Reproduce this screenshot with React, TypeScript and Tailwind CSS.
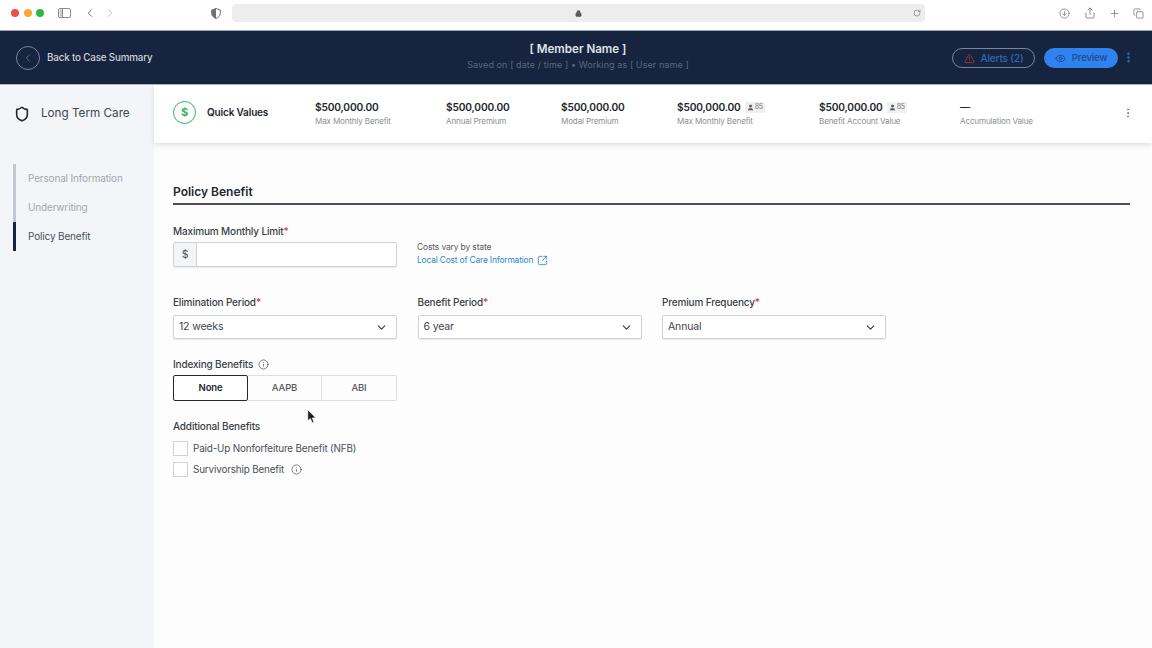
import { ChevronDown, ChevronLeft, ChevronRight, CircleArrowDown, Eye, EllipsisVertical, Info, Lock, Plus, RotateCw, Share, Shield, SquareArrowOutUpRight, TriangleAlert, User, Copy } from "lucide-react";

const quickValues = [
  { value: "$500,000.00", label: "Max Monthly Benefit", width: "w-[131px]" },
  { value: "$500,000.00", label: "Annual Premium", width: "w-[115px]" },
  { value: "$500,000.00", label: "Modal Premium", width: "w-[116px]" },
  { value: "$500,000.00", label: "Max Monthly Benefit", width: "w-[142px]", badge: true },
  { value: "$500,000.00", label: "Benefit Account Value", width: "w-[141px]", badge: true },
  { value: "—", label: "Accumulation Value", width: "w-[163px]" },
];

function Req({ children }: { children: React.ReactNode }) {
  return (
    <div className="text-[10px] leading-[14px] font-medium text-[#3a3f47]">
      {children}
      <span className="text-[#e5304a]">*</span>
    </div>
  );
}

function SelectBox({ label, value }: { label: string; value: string }) {
  return (
    <div className="w-[224px]">
      <Req>{label}</Req>
      <div className="mt-[6px] flex h-[24px] items-center justify-between rounded-[2px] border border-[#cfd3d8] bg-white pr-[8px] pl-[5px] text-[10.5px] text-[#3f444c] shadow-[0_1px_1px_rgba(0,0,0,0.08)]">
        {value}
        <ChevronDown className="h-[13px] w-[13px] text-[#3a3f47]" strokeWidth={2.2} />
      </div>
    </div>
  );
}

export default function App() {
  return (
    <div className="relative flex h-[648px] w-[1152px] flex-col overflow-hidden bg-[#fdfdfd] font-['Inter','Liberation_Sans',sans-serif] tracking-[-0.01em]">
      {/* browser chrome */}
      <div className="flex h-[31px] shrink-0 items-center border-b border-[#9aa3b2] bg-white pb-[4px]">
        <div className="ml-[11px] flex gap-[4.5px]">
          <span className="h-[8px] w-[8px] rounded-full bg-[#ee4f47]" />
          <span className="h-[8px] w-[8px] rounded-full bg-[#f4ab2f]" />
          <span className="h-[8px] w-[8px] rounded-full bg-[#2fb84a]" />
        </div>
        <svg className="ml-[14px] h-[10px] w-[13px] text-[#8a8d92]" viewBox="0 0 13 10" fill="none" stroke="currentColor">
          <rect x="0.5" y="0.5" width="12" height="9" rx="1.5" />
          <rect x="1.5" y="1.5" width="3" height="7" fill="currentColor" stroke="none" opacity="0.45" />
          <path d="M4.5 0.5v9" />
        </svg>
        <ChevronLeft className="ml-[12px] h-[14px] w-[14px] text-[#6f7277]" strokeWidth={1.6} />
        <ChevronRight className="ml-[6px] h-[14px] w-[14px] text-[#b9bbbe]" strokeWidth={1.6} />
        <svg className="ml-[94px] h-[11px] w-[10px]" viewBox="0 0 10 11">
          <path d="M5 .5 9.3 2v3.2C9.3 8 7.3 9.6 5 10.5 2.7 9.6.7 8 .7 5.2V2Z" fill="#fff" stroke="#6f7277" />
          <path d="M5 .5 .7 2v3.2C.7 8 2.7 9.6 5 10.5Z" fill="#6f7277" />
        </svg>
        <div className="ml-[11px] flex h-[18px] w-[693px] items-center rounded-[4px] bg-[#ededed]">
          <Lock className="ml-[343px] h-[7px] w-[7px] text-[#55585c]" fill="currentColor" strokeWidth={2} />
          <RotateCw className="mr-[4px] ml-auto h-[8px] w-[8px] text-[#77797c]" strokeWidth={2} />
        </div>
        <CircleArrowDown className="ml-[134px] h-[11px] w-[11px] text-[#6f7277]" strokeWidth={1.6} />
        <Share className="ml-[14px] h-[12px] w-[12px] text-[#6f7277]" strokeWidth={1.6} />
        <Plus className="ml-[13px] h-[11px] w-[11px] text-[#6f7277]" strokeWidth={1.6} />
        <Copy className="ml-[13px] h-[11px] w-[11px] text-[#6f7277]" strokeWidth={1.6} />
      </div>

      {/* dark header */}
      <header className="flex h-[54px] shrink-0 items-center border-b border-[#aeb6c4] bg-[#17243f] pl-[16px]">
        <div className="flex w-[416px] shrink-0 items-center">
          <div className="flex h-[24px] w-[24px] items-center justify-center rounded-full border border-[#7c8698]">
            <ChevronLeft className="h-[14px] w-[14px] text-[#7c8698]" strokeWidth={1.2} />
          </div>
          <span className="ml-[7px] pt-[2px] text-[9.8px] font-medium text-[#cdd2da]">Back to Case Summary</span>
        </div>
        <div className="w-[292px] shrink-0 pb-[3px] text-center">
          <div className="text-[11.6px] leading-[16px] font-semibold tracking-[0] text-[#dfe3e9]">[ Member Name ]</div>
          <div className="mt-[1px] text-[9px] leading-[14px] tracking-[0.01em] text-[#5b677c]">Saved on [ date / time ] • Working as [ User name ]</div>
        </div>
        <div className="ml-[228px] flex h-[20px] w-[83px] items-center justify-center gap-[6px] rounded-full border border-[#7c8698] pt-[1px] text-[10px] font-medium text-[#2f66b8]">
          <TriangleAlert className="h-[11px] w-[11px] text-[#9a3245]" strokeWidth={2} />
          Alerts (2)
        </div>
        <div className="ml-[9px] flex h-[20px] w-[74px] items-center justify-center gap-[6px] rounded-full bg-[#3082ee] pt-[2px] text-[9.6px] font-medium text-[#20488c]">
          <Eye className="h-[11px] w-[11px]" strokeWidth={2} />
          Preview
        </div>
        <EllipsisVertical className="ml-[4px] h-[13px] w-[13px] text-[#2a6fc9]" strokeWidth={2.4} />
      </header>

      <div className="flex min-h-0 flex-1">
        {/* sidebar */}
        <aside className="w-[154px] shrink-0 bg-[#f3f5f9]">
          <div className="flex h-[58px] items-center pl-[14px]">
            <Shield className="h-[16px] w-[16px] text-[#23272e]" strokeWidth={2.4} />
            <span className="ml-[11px] text-[11.7px] font-normal tracking-[0] text-[#41464e]">Long Term Care</span>
          </div>
          <nav className="mt-[21px] ml-[13px] text-[10px]">
            <div className="flex h-[29px] items-center border-l-[3px] border-[#c3c8d0] pl-[12px] text-[#a3a7ae]">Personal Information</div>
            <div className="flex h-[29px] items-center border-l-[3px] border-[#c3c8d0] pl-[12px] text-[#a3a7ae]">Underwriting</div>
            <div className="flex h-[29px] items-center border-l-[3px] border-[#17243f] pl-[12px] text-[#4a4f57]">Policy Benefit</div>
          </nav>
        </aside>

        <div className="min-w-0 flex-1">
          {/* quick values */}
          <div className="flex h-[58px] items-center bg-white pb-[3px] pl-[19px] shadow-[0_2px_5px_rgba(0,0,0,0.12)]">
            <div className="flex h-[23px] w-[23px] shrink-0 items-center justify-center rounded-full border-[1.5px] border-[#2fb457] text-[11px] font-bold text-[#2fb457]">$</div>
            <div className="ml-[11px] w-[108px] shrink-0 text-[10px] font-semibold text-[#23272e]">Quick Values</div>
            {quickValues.map((q, i) => (
              <div key={i} className={`${q.width} shrink-0 pt-[2px]`}>
                <div className="flex h-[14px] items-center text-[10.2px] leading-[14px] font-semibold text-[#23272e]">
                  {q.value}
                  {q.badge && (
                    <span className="ml-[4px] flex h-[11px] items-center rounded-[1px] bg-[#f0f0f0] px-[2px] text-[7px] font-normal text-[#77797c]">
                      <User className="mr-[1px] h-[7px] w-[7px] text-[#55585c]" fill="currentColor" />
                      85
                    </span>
                  )}
                </div>
                <div className="mt-[2px] text-[8.1px] leading-[11px] text-[#8b8f96]">{q.label}</div>
              </div>
            ))}
            <EllipsisVertical className="-ml-[1px] h-[12px] w-[12px] text-[#6f7277]" strokeWidth={2} />
          </div>

          {/* form */}
          <main className="pt-[41px] pr-[22px] pl-[19px]">
            <h2 className="border-b-2 border-[#4a4f57] pb-[4px] text-[12px] leading-[15px] font-semibold tracking-[0] text-[#23272e]">Policy Benefit</h2>

            <div className="mt-[19px] flex">
              <div className="w-[224px]">
                <Req>Maximum Monthly Limit</Req>
                <div className="mt-[4px] flex h-[25px] overflow-hidden rounded-[2px] border border-[#cfd3d8] bg-white shadow-[0_1px_1px_rgba(0,0,0,0.08)]">
                  <div className="flex w-[23px] items-center justify-center border-r border-[#cfd3d8] bg-[#f3f4f6] text-[10.5px] text-[#4a4f57]">$</div>
                </div>
              </div>
              <div className="ml-[20px] pt-[17px]">
                <div className="text-[8.5px] leading-[13px] text-[#55585c]">Costs vary by state</div>
                <div className="flex items-center text-[8.4px] leading-[13px] text-[#2f86d0]">
                  Local Cost of Care Information
                  <SquareArrowOutUpRight className="ml-[4px] h-[11px] w-[11px]" strokeWidth={1.8} />
                </div>
              </div>
            </div>

            <div className="mt-[28px] flex gap-[20.5px]">
              <SelectBox label="Elimination Period" value="12 weeks" />
              <SelectBox label="Benefit Period" value="6 year" />
              <SelectBox label="Premium Frequency" value="Annual" />
            </div>

            <div className="mt-[18px] flex items-center text-[10px] leading-[14px] font-medium text-[#3a3f47]">
              Indexing Benefits
              <Info className="ml-[5px] h-[11px] w-[11px] text-[#55585c]" strokeWidth={1.6} />
            </div>
            <div className="mt-[4px] flex h-[26px] w-[224px] text-[9.5px] font-medium text-[#55585c]">
              <div className="flex w-[75px] items-center justify-center rounded-[2px] border-[1.5px] border-[#23272e] bg-white pt-[1px] font-semibold text-[#23272e]">None</div>
              <div className="flex w-[74px] items-center justify-center border-y border-r border-[#dcdfe3] pt-[1px]">AAPB</div>
              <div className="flex w-[75px] items-center justify-center rounded-r-[2px] border-y border-r border-[#dcdfe3] pt-[1px]">ABI</div>
            </div>

            <div className="mt-[18px] text-[10px] leading-[14px] font-medium text-[#3a3f47]">Additional Benefits</div>
            <div className="mt-[8px] flex items-center text-[9.9px] text-[#4a4f57]">
              <span className="mr-[5px] h-[15px] w-[15px] border border-[#cfd3d8] bg-white" />
              Paid-Up Nonforfeiture Benefit (NFB)
            </div>
            <div className="mt-[6px] flex items-center text-[9.9px] text-[#4a4f57]">
              <span className="mr-[5px] h-[15px] w-[15px] border border-[#cfd3d8] bg-white" />
              Survivorship Benefit
              <Info className="ml-[7px] h-[11px] w-[11px] text-[#55585c]" strokeWidth={1.6} />
            </div>
          </main>
        </div>
      </div>

      {/* mouse pointer */}
      <svg className="absolute top-[409px] left-[307px] h-[15px] w-[10px]" viewBox="0 0 10 15">
        <path d="M.8.8v11l2.6-2.3 1.7 4.2 1.8-.8L5.2 9l3.4-.2Z" fill="#1d1f22" stroke="#fff" strokeWidth=".6" />
      </svg>
    </div>
  );
}
